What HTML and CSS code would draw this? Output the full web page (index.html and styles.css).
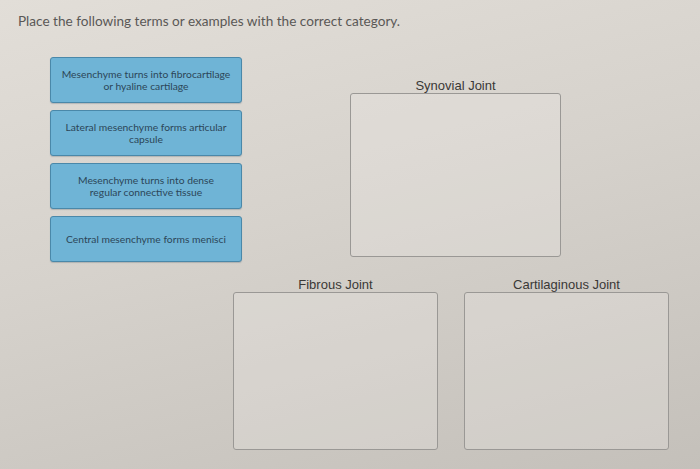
FILE: index.html
```html
<!DOCTYPE html>
<html lang="en">
<head>
    <meta charset="UTF-8">
    <meta name="viewport" content="width=device-width, initial-scale=1.0">
    <title>Joint Categories</title>
    <link rel="stylesheet" href="styles.css">
</head>
<body>
    <div class="page">
        <p class="prompt">Place the following terms or examples with the correct category.</p>

        <div class="top-row">
            <div class="term-list">
                <div class="term">Mesenchyme turns into fibrocartilage<br>or hyaline cartilage</div>
                <div class="term">Lateral mesenchyme forms articular<br>capsule</div>
                <div class="term">Mesenchyme turns into dense<br>regular connective tissue</div>
                <div class="term">Central mesenchyme forms menisci</div>
            </div>
            <div class="category synovial">
                <div class="category-label">Synovial Joint</div>
                <div class="drop-zone"></div>
            </div>
        </div>

        <div class="bottom-row">
            <div class="category">
                <div class="category-label">Fibrous Joint</div>
                <div class="drop-zone short"></div>
            </div>
            <div class="category">
                <div class="category-label">Cartilaginous Joint</div>
                <div class="drop-zone short"></div>
            </div>
        </div>
    </div>
</body>
</html>
```

FILE: styles.css
```css
/* Sorting exercise: draggable terms on the left, drop zones on the right */
body {
    margin: 0;
    padding: 0;
    height: 469px;
    overflow: hidden;
    font-family: 'Lato', 'Open Sans', sans-serif;
    background: linear-gradient(165deg, #e2ded8 0%, #d6d2cc 45%, #c4c0ba 100%);
}

.page {
    display: flex;
    flex-direction: column;
}

.prompt {
    margin: 0;
    padding: 13px 0 0 18px;
    font-size: 13.6px;
    line-height: 16px;
    color: #5a5856;
}

.top-row {
    display: flex;
    margin-top: 28px;
}

.term-list {
    display: flex;
    flex-direction: column;
    gap: 7px;
    margin-left: 50px;
    width: 192px;
}

.term {
    height: 46px;
    box-sizing: border-box;
    display: flex;
    align-items: center;
    justify-content: center;
    text-align: center;
    font-size: 10.3px;
    line-height: 12px;
    color: #2c4658;
    background-color: #6fb4d6;
    border: 1px solid #4a88a9;
    border-radius: 3px;
    box-shadow: 0 1px 1px rgba(60, 80, 100, 0.25);
}

.category {
    display: flex;
    flex-direction: column;
    width: 205px;
}

.synovial {
    margin-left: 108px;
    margin-top: 21px;
    width: 211px;
}

.category-label {
    font-family: 'Liberation Sans', Arial, sans-serif;
    font-size: 13px;
    line-height: 15px;
    text-align: center;
    color: #3a3836;
}

.drop-zone {
    height: 164px;
    box-sizing: border-box;
    border: 1px solid #9a9895;
    border-radius: 3px;
    background-color: rgba(236, 233, 228, 0.3);
}

.drop-zone.short {
    height: 158px;
}

.bottom-row {
    display: flex;
    gap: 26px;
    padding-left: 233px;
    margin-top: 15px;
}
```
